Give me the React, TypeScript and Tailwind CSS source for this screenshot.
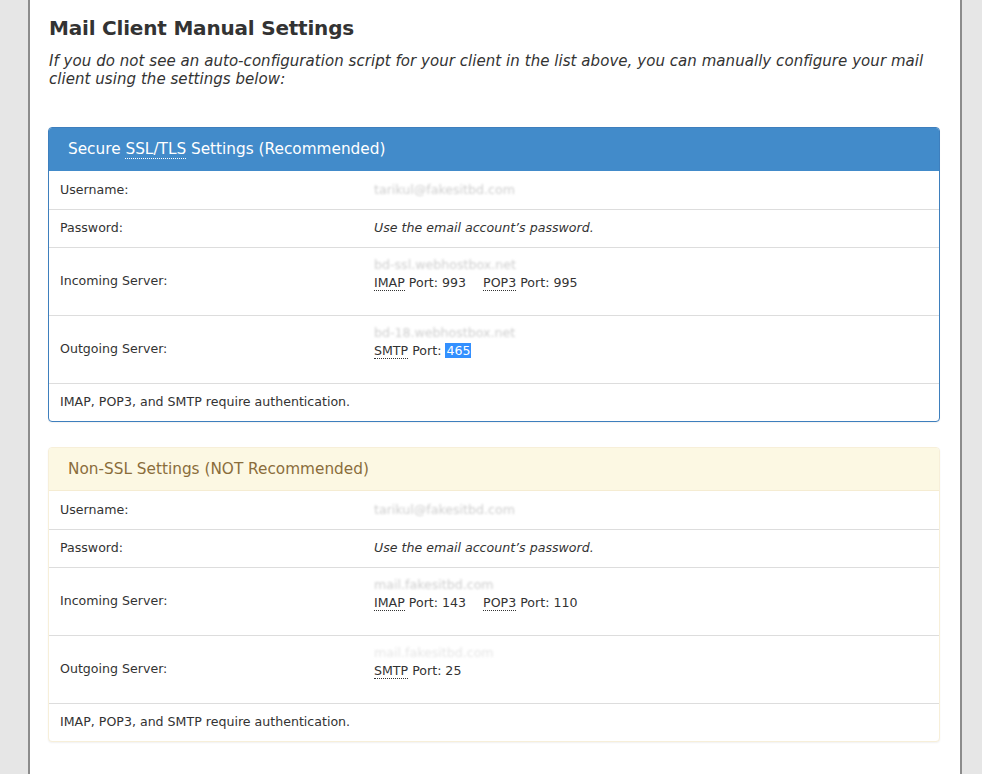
import React from "react"

const font = { fontFamily: '"DejaVu Sans", Verdana, sans-serif' }

function Abbr({ children }: { children: React.ReactNode }) {
    return <span className="border-b border-dotted border-[#333]">{children}</span>
}

// blurred-out account values, the screenshot had them scrubbed
function Hidden({ text, faint }: { text: string; faint?: boolean }) {
    return (
        <div className={"h-[18px] leading-[18px] blur-[0.8px] " + (faint ? "text-[#e6e6e6]" : "text-[#cfcfcf]")}>{text}</div>
    )
}

type Row = {
    label: string
    tall?: boolean
    value: React.ReactNode
}

function Panel({ title, variant, rows }: { title: React.ReactNode; variant: "ssl" | "plain"; rows: Row[] }) {
    const ssl = variant === "ssl"
    return (
        <div
            className={
                ssl
                    ? "rounded-[4px] border border-[#3e7fbd] bg-white shadow-[0_1px_1px_rgba(0,0,0,0.05)]"
                    : "rounded-[4px] border border-[#f7efd9] bg-white shadow-[0_1px_2px_rgba(0,0,0,0.06)]"
            }
        >
            <div
                className={
                    ssl
                        ? "h-[43px] flex items-center px-[19px] bg-[#428bca] text-white text-[15.3px] rounded-t-[3px]"
                        : "h-[43px] flex items-center px-[19px] bg-[#fcf8e3] text-[#8a6d3b] text-[15.3px] rounded-t-[3px] border-b border-[#f5ecd2]"
                }
            >
                {title}
            </div>
            {rows.map((r, i) => (
                <div
                    key={i}
                    className={
                        "flex text-[12.6px] text-[#333] " +
                        (i > 0 ? "border-t border-[#dddddd] " : "") +
                        (r.tall ? "h-[68px]" : "h-[38px]")
                    }
                >
                    <div className="w-[325px] pl-[11px] flex items-center">{r.label}</div>
                    <div className={"flex-1 flex flex-col " + (r.tall ? "pt-[8px]" : "justify-center")}>{r.value}</div>
                </div>
            ))}
            <div className="border-t border-[#dddddd] h-[38px] flex items-center pl-[11px] text-[12.6px] text-[#333]">
                IMAP, POP3, and SMTP require authentication.
            </div>
        </div>
    )
}

export default function App() {
    const password = <span className="italic">Use the email account’s password.</span>

    const sslRows: Row[] = [
        { label: "Username:", value: <Hidden text="tarikul@fakesitbd.com" /> },
        { label: "Password:", value: password },
        {
            label: "Incoming Server:",
            tall: true,
            value: (
                <>
                    <Hidden text="bd-ssl.webhostbox.net" />
                    <div className="h-[18px] leading-[18px]">
                        <Abbr>IMAP</Abbr> Port: 993<span className="ml-[17px]"><Abbr>POP3</Abbr> Port: 995</span>
                    </div>
                </>
            ),
        },
        {
            label: "Outgoing Server:",
            tall: true,
            value: (
                <>
                    <Hidden text="bd-18.webhostbox.net" />
                    <div className="h-[18px] leading-[18px]">
                        <Abbr>SMTP</Abbr> Port: <span className="bg-[#3390ff] text-white px-[1px]">465</span>
                    </div>
                </>
            ),
        },
    ]

    const plainRows: Row[] = [
        { label: "Username:", value: <Hidden text="tarikul@fakesitbd.com" /> },
        { label: "Password:", value: password },
        {
            label: "Incoming Server:",
            tall: true,
            value: (
                <>
                    <Hidden text="mail.fakesitbd.com" />
                    <div className="h-[18px] leading-[18px]">
                        <Abbr>IMAP</Abbr> Port: 143<span className="ml-[17px]"><Abbr>POP3</Abbr> Port: 110</span>
                    </div>
                </>
            ),
        },
        {
            label: "Outgoing Server:",
            tall: true,
            value: (
                <>
                    <Hidden text="mail.fakesitbd.com" faint />
                    <div className="h-[18px] leading-[18px]">
                        <Abbr>SMTP</Abbr> Port: 25
                    </div>
                </>
            ),
        },
    ]

    return (
        <div className="min-h-screen bg-[#e6e6e6] flex" style={font}>
            <div className="ml-[28px] w-[934px] min-h-screen bg-white border-x-2 border-[#8c8c8c] pl-[18px] pr-[20px] pt-[14px]">
                <h1 className="text-[20px] tracking-[-0.2px] font-bold text-[#333] leading-[28px] pl-[1px]">Mail Client Manual Settings</h1>
                <p className="mt-[10px] text-[15px] tracking-[0.05px] italic text-[#333] leading-[18px] pl-[1px]">
                    If you do not see an auto-configuration script for your client in the list above, you can manually configure your mail client using the settings below:
                </p>
                <div className="mt-[39px]">
                    <Panel
                        variant="ssl"
                        title={
                            <span>
                                Secure <span className="border-b border-dotted border-white">SSL/TLS</span> Settings (Recommended)
                            </span>
                        }
                        rows={sslRows}
                    />
                </div>
                <div className="mt-[25px]">
                    <Panel variant="plain" title="Non-SSL Settings (NOT Recommended)" rows={plainRows} />
                </div>
            </div>
        </div>
    )
}
